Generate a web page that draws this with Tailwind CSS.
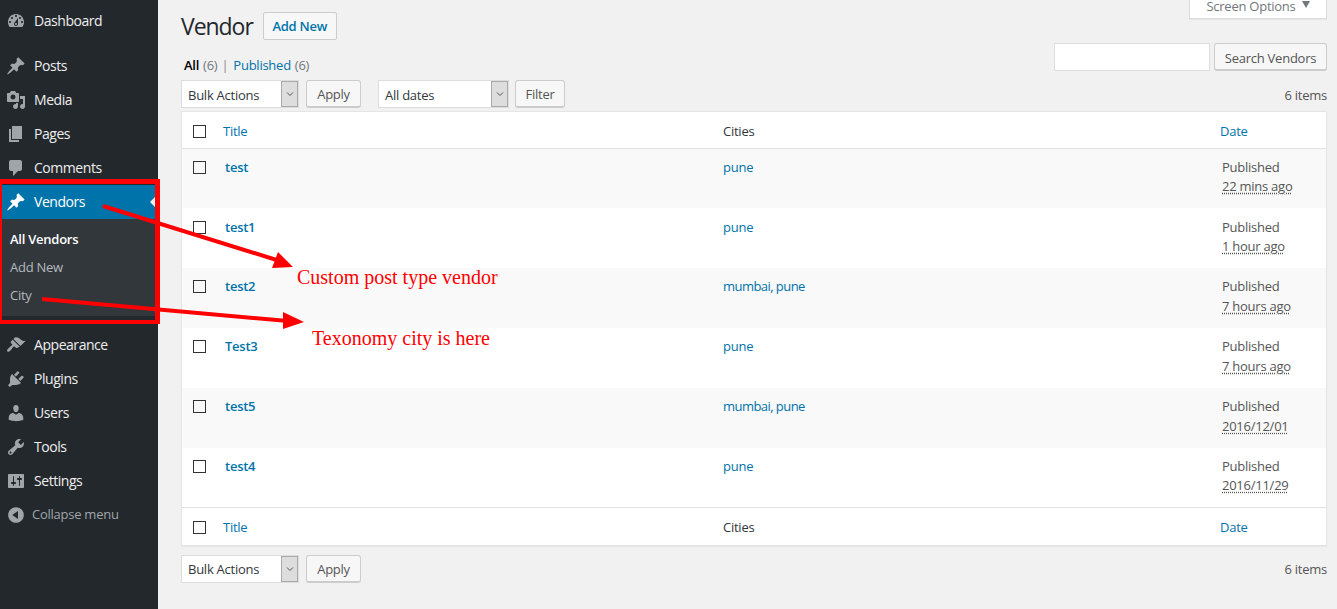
<!DOCTYPE html>
<html lang="en">
<head>
    <meta charset="UTF-8">
    <title>Vendor</title>
    <script src="https://cdn.jsdelivr.net/npm/@tailwindcss/browser@4"></script>
</head>
<body class="relative h-[609px] overflow-hidden bg-[#f1f1f1] font-['Open_Sans',sans-serif] text-[13px] leading-[19px] tracking-[-0.25px] text-[#444]">
    <div class="flex h-[609px]">
        <!-- Sidebar -->
        <nav class="w-[158px] shrink-0 bg-[#23282d] pt-1 text-[14px] tracking-[-0.45px] text-[#eee]">
            <a class="flex h-[34px] items-center">
                <svg class="ml-[6px] h-5 w-5 fill-[#a0a5aa]" viewBox="0 0 20 20"><path fill-rule="evenodd" d="M3.76 16h12.48c1.1-1.37 1.76-3.11 1.76-5 0-4.42-3.58-8-8-8s-8 3.58-8 8c0 1.89.66 3.63 1.76 5zM10 4c.55 0 1 .45 1 1s-.45 1-1 1-1-.45-1-1 .45-1 1-1zM6 6c.55 0 1 .45 1 1s-.45 1-1 1-1-.45-1-1 .45-1 1-1zm8 0c.55 0 1 .45 1 1s-.45 1-1 1-1-.45-1-1 .45-1 1-1zm-5.37 5.55L12 7v6c0 1.1-.9 2-2 2s-2-.9-2-2c0-.57.24-1.08.63-1.45zM4 10c.55 0 1 .45 1 1s-.45 1-1 1-1-.45-1-1 .45-1 1-1zm12 0c.55 0 1 .45 1 1s-.45 1-1 1-1-.45-1-1 .45-1 1-1zm-5 3c0-.55-.45-1-1-1s-1 .45-1 1 .45 1 1 1 1-.45 1-1z"/></svg>
                <span class="ml-2 -mt-[2px]">Dashboard</span>
            </a>
            <div class="h-[11px]"></div>
            <a class="flex h-[34px] items-center">
                <svg class="ml-[6px] h-5 w-5 fill-[#a0a5aa]" viewBox="0 0 20 20"><path d="M10.44 3.02l1.82-1.82 6.36 6.35-1.83 1.82c-1.05-.68-2.48-.57-3.41.36l-.75.75c-.92.93-1.04 2.35-.35 3.41l-1.83 1.82-2.41-2.41-2.8 2.79c-.42.42-3.38 2.71-3.8 2.29s1.86-3.39 2.28-3.81l2.79-2.79L4.1 9.36l1.83-1.82c1.05.69 2.48.57 3.4-.36l.75-.75c.93-.92 1.05-2.35.36-3.41z"/></svg>
                <span class="ml-2 -mt-[2px]">Posts</span>
            </a>
            <a class="flex h-[34px] items-center">
                <svg class="ml-[6px] h-5 w-5 fill-[#a0a5aa]" viewBox="0 0 20 20"><path fill-rule="evenodd" d="M13 11V4c0-.55-.45-1-1-1h-1.67L9 1H5L3.67 3H2c-.55 0-1 .45-1 1v7c0 .55.45 1 1 1h10c.55 0 1-.45 1-1zM7 4.5c1.38 0 2.5 1.12 2.5 2.5S8.38 9.5 7 9.5 4.5 8.38 4.5 7 5.62 4.5 7 4.5zM14 6h5v10.5c0 1.38-1.12 2.5-2.5 2.5S14 17.88 14 16.5s1.12-2.5 2.5-2.5c.17 0 .34.02.5.05V9h-3V6zm-4 8.05V13h2v3.5c0 1.38-1.12 2.5-2.5 2.5S7 17.88 7 16.5 8.12 14 9.5 14c.17 0 .34.02.5.05z"/></svg>
                <span class="ml-2 -mt-[2px]">Media</span>
            </a>
            <a class="flex h-[34px] items-center">
                <svg class="ml-[6px] h-5 w-5 fill-[#a0a5aa]" viewBox="0 0 20 20"><path d="M6 15V2h10v13H6zm-1 1h8v2H3V5h2v11z"/></svg>
                <span class="ml-2 -mt-[2px]">Pages</span>
            </a>
            <a class="flex h-[34px] items-center">
                <svg class="ml-[6px] h-5 w-5 fill-[#a0a5aa]" viewBox="0 0 20 20"><path d="M5 2h9c1.1 0 2 .9 2 2v7c0 1.1-.9 2-2 2h-2l-5 5v-5H5c-1.1 0-2-.9-2-2V4c0-1.1.9-2 2-2z"/></svg>
                <span class="ml-2 -mt-[2px]">Comments</span>
            </a>
            <!-- Current menu -->
            <a class="relative flex h-[34px] items-center bg-[#0073aa] text-white">
                <svg class="ml-[6px] h-5 w-5 fill-white" viewBox="0 0 20 20"><path d="M10.44 3.02l1.82-1.82 6.36 6.35-1.83 1.82c-1.05-.68-2.48-.57-3.41.36l-.75.75c-.92.93-1.04 2.35-.35 3.41l-1.83 1.82-2.41-2.41-2.8 2.79c-.42.42-3.38 2.71-3.8 2.29s1.86-3.39 2.28-3.81l2.79-2.79L4.1 9.36l1.83-1.82c1.05.69 2.48.57 3.4-.36l.75-.75c.93-.92 1.05-2.35.36-3.41z"/></svg>
                <span class="ml-2 -mt-[2px]">Vendors</span>
                <span class="absolute right-0 top-[9px] h-0 w-0 border-y-[8px] border-r-[8px] border-y-transparent border-r-[#f1f1f1]"></span>
            </a>
            <div class="h-[97px] bg-[#32373c] pt-[6px] pl-[10px] text-[13px] tracking-[-0.25px]">
                <div class="flex h-[28px] items-center font-semibold text-white">All Vendors</div>
                <div class="flex h-[28px] items-center text-[#b4b9be]">Add New</div>
                <div class="flex h-[28px] items-center text-[#b4b9be]">City</div>
            </div>
            <div class="h-[12px]"></div>
            <a class="flex h-[34px] items-center">
                <svg class="ml-[6px] h-5 w-5 fill-[#a0a5aa]" viewBox="0 0 20 20"><path d="M14.48 11.06L7.41 3.99l1.5-1.5c.5-.56 2.3-.47 3.51.32 1.21.8 1.43 1.28 2.91 2.1 1.18.64 2.45 1.26 4.45.85zm-.71.71L6.7 4.7 4.93 6.47c-.39.39-.39 1.02 0 1.41l1.06 1.06c.39.39.39 1.03 0 1.42-.6.6-1.43 1.11-2.21 1.69-.35.26-.7.53-1.01.84-1.34 1.34-2.37 2.51-1.37 3.51 1 1 2.12-.1 3.49-1.46.31-.31.58-.66.84-1.01.58-.78 1.09-1.61 1.69-2.21.39-.39 1.02-.39 1.41 0l1.06 1.06c.39.39 1.02.39 1.41 0z"/></svg>
                <span class="ml-2 -mt-[2px]">Appearance</span>
            </a>
            <a class="flex h-[34px] items-center">
                <svg class="ml-[6px] h-5 w-5 fill-[#a0a5aa]" viewBox="0 0 20 20"><path d="M13.11 4.36L9.87 7.6 8 5.73l3.24-3.24c.35-.34 1.05-.2 1.56.32.52.51.66 1.21.31 1.55zm-8 1.77l.91-1.12 9.01 9.01-1.19.84c-.71.71-2.63 1.16-3.82 1.16H6.14L4.9 17.26c-.59.59-1.54.59-2.12 0-.59-.58-.59-1.53 0-2.12l1.24-1.24v-3.88c0-1.13.4-3.19 1.09-3.89zm7.26 3.97l3.24-3.24c.34-.35 1.04-.21 1.55.31.52.51.66 1.21.31 1.55l-3.24 3.25z"/></svg>
                <span class="ml-2 -mt-[2px]">Plugins</span>
            </a>
            <a class="flex h-[34px] items-center">
                <svg class="ml-[6px] h-5 w-5 fill-[#a0a5aa]" viewBox="0 0 20 20"><path d="M10 9.25c-2.27 0-2.73-3.44-2.73-3.44C7 4.02 7.82 2 9.97 2c2.16 0 2.98 2.02 2.71 3.81 0 0-.41 3.44-2.68 3.44zm0 2.57L12.72 10c2.39 0 4.52 2.33 4.52 4.53v2.49s-3.65 1.13-7.24 1.13c-3.65 0-7.24-1.13-7.24-1.13v-2.49c0-2.25 1.94-4.48 4.47-4.48z"/></svg>
                <span class="ml-2 -mt-[2px]">Users</span>
            </a>
            <a class="flex h-[34px] items-center">
                <svg class="ml-[6px] h-5 w-5 fill-[#a0a5aa]" viewBox="0 0 20 20"><path fill-rule="evenodd" d="M16.68 9.77c-1.34 1.34-3.3 1.67-4.95.99l-5.41 6.52c-.99.99-2.59.99-3.58 0s-.99-2.59 0-3.57l6.52-5.42c-.68-1.65-.35-3.61.99-4.95 1.28-1.28 3.12-1.62 4.72-1.06l-2.89 2.89 2.82 2.82 2.86-2.87c.53 1.58.18 3.39-1.08 4.65zM3.81 16.21c.4.39 1.04.39 1.43 0 .4-.4.4-1.04 0-1.43-.39-.4-1.03-.4-1.43 0-.39.39-.39 1.03 0 1.43z"/></svg>
                <span class="ml-2 -mt-[2px]">Tools</span>
            </a>
            <a class="flex h-[34px] items-center">
                <svg class="ml-[6px] h-5 w-5 fill-[#a0a5aa]" viewBox="0 0 20 20"><path fill-rule="evenodd" d="M18 16V4c0-.55-.45-1-1-1H3c-.55 0-1 .45-1 1v12c0 .55.45 1 1 1h14c.55 0 1-.45 1-1zM8 11h1c.55 0 1 .45 1 1s-.45 1-1 1H8v1.5c0 .28-.22.5-.5.5s-.5-.22-.5-.5V13H6c-.55 0-1-.45-1-1s.45-1 1-1h1V5.5c0-.28.22-.5.5-.5s.5.22.5.5V11zm5-2h-1c-.55 0-1-.45-1-1s.45-1 1-1h1V5.5c0-.28.22-.5.5-.5s.5.22.5.5V7h1c.55 0 1 .45 1 1s-.45 1-1 1h-1v5.5c0 .28-.22.5-.5.5s-.5-.22-.5-.5V9z"/></svg>
                <span class="ml-2 -mt-[2px]">Settings</span>
            </a>
            <a class="flex h-[33px] items-center text-[13px] tracking-[-0.25px] text-[#a0a5aa]">
                <svg class="ml-[6px] h-5 w-5 fill-[#a0a5aa]" viewBox="0 0 20 20"><path fill-rule="evenodd" d="M10 2.16c4.33 0 7.84 3.51 7.84 7.84s-3.51 7.84-7.84 7.84S2.16 14.33 2.16 10 5.71 2.16 10 2.16zm2 11.72V6.12L6.18 9.97z"/></svg>
                <span class="ml-[6px]">Collapse menu</span>
            </a>
        </nav>

        <!-- Main -->
        <main class="relative min-w-0 flex-1 pl-[23px] pr-[10px]">
            <!-- Screen options tab -->
            <div class="absolute right-[10px] top-0 flex h-[19px] w-[138px] items-start justify-center gap-[6px] border-x border-b border-[#ddd] bg-white text-[#72777c] leading-[13px] shadow-[0_1px_1px_rgba(0,0,0,0.04)]">
                <span>Screen Options</span>
                <span class="mt-[1px] h-0 w-0 border-x-[4px] border-t-[7px] border-x-transparent border-t-[#72777c]"></span>
            </div>

            <div class="flex justify-between">
                <div>
                    <div class="flex h-[43px] items-end">
                        <h1 class="mb-[2px] text-[23px] leading-[29px] tracking-[-1.05px] text-[#23282d]">Vendor</h1>
                        <a class="mb-[3px] ml-[10px] flex h-[28px] w-[74px] items-center justify-center rounded-[2px] border border-[#ccc] bg-[#f7f7f7] font-semibold text-[#0073aa]">Add New</a>
                    </div>
                    <div class="mt-[13px] flex text-[#72777c]">
                        <b class="ml-[3px] font-semibold text-black">All</b>
                        <span class="ml-1">(6)</span>
                        <span class="ml-[4px] mr-[5px] text-[#888]">|</span>
                        <span class="text-[#0073aa]">Published</span>
                        <span class="ml-1">(6)</span>
                    </div>
                </div>
                <div class="mt-[43px] flex gap-1">
                    <div class="h-[28px] w-[156px] border border-[#ddd] bg-white"></div>
                    <a class="flex h-[28px] w-[113px] items-center justify-center rounded-[3px] border border-b-2 border-[#ccc] bg-[#f7f7f7] pt-[3px] text-[#555]">Search Vendors</a>
                </div>
            </div>

            <!-- Top toolbar -->
            <div class="mt-[5px] flex h-[28px] items-center">
                <div class="flex h-[28px] w-[118px] border border-[#ddd] bg-white">
                    <span class="flex flex-1 items-center pl-[6px] pt-[2px] text-[#32373c]">Bulk Actions</span>
                    <span class="flex w-[17px] items-center justify-center border border-[#aaa] bg-[#ddd]">
                        <svg class="h-2 w-2 fill-none stroke-[#555]" viewBox="0 0 8 8"><path d="M1 2.5l3 3 3-3"/></svg>
                    </span>
                </div>
                <a class="ml-[7px] flex h-[28px] w-[55px] items-center justify-center rounded-[3px] border border-b-2 border-[#ccc] bg-[#f7f7f7] pt-[2px] text-[#555]">Apply</a>
                <div class="ml-[17px] flex h-[28px] w-[131px] border border-[#ddd] bg-white">
                    <span class="flex flex-1 items-center pl-[6px] pt-[2px] text-[#32373c]">All dates</span>
                    <span class="flex w-[17px] items-center justify-center border border-[#aaa] bg-[#ddd]">
                        <svg class="h-2 w-2 fill-none stroke-[#555]" viewBox="0 0 8 8"><path d="M1 2.5l3 3 3-3"/></svg>
                    </span>
                </div>
                <a class="ml-[6px] flex h-[28px] w-[50px] items-center justify-center rounded-[3px] border border-b-2 border-[#ccc] bg-[#f7f7f7] pt-[2px] text-[#555]">Filter</a>
                <span class="ml-auto pt-[2px] text-[#555]">6 items</span>
            </div>

            <!-- Table -->
            <div class="mt-[3px] border border-[#e5e5e5] bg-white shadow-[0_1px_1px_rgba(0,0,0,0.04)]">
                <div class="grid h-[37px] grid-cols-[41px_500px_497px_1fr] items-center border-b border-[#e1e1e1] pt-[2px]">
                    <span class="ml-[11px] h-[13px] w-[13px] border border-[#333]"></span>
                    <span class="text-[#0073aa]">Title</span>
                    <span class="text-[#32373c]">Cities</span>
                    <span class="text-[#0073aa]">Date</span>
                </div>
                <div class="grid h-[59px] grid-cols-[43px_498px_499px_1fr] bg-[#f9f9f9] pt-[9px]">
                    <span class="ml-[11px] mt-[3px] h-[13px] w-[13px] border border-[#333]"></span>
                    <a class="font-semibold text-[#0073aa]">test</a>
                    <a class="text-[#0073aa]">pune</a>
                    <div class="text-[#555]">Published<br><span class="underline decoration-dotted underline-offset-2">22 mins ago</span></div>
                </div>
                <div class="grid h-[60px] grid-cols-[43px_498px_499px_1fr] pt-[10px]">
                    <span class="ml-[11px] mt-[3px] h-[13px] w-[13px] border border-[#333]"></span>
                    <a class="font-semibold text-[#0073aa]">test1</a>
                    <a class="text-[#0073aa]">pune</a>
                    <div class="text-[#555]">Published<br><span class="underline decoration-dotted underline-offset-2">1 hour ago</span></div>
                </div>
                <div class="grid h-[60px] grid-cols-[43px_498px_499px_1fr] bg-[#f9f9f9] pt-[9px]">
                    <span class="ml-[11px] mt-[3px] h-[13px] w-[13px] border border-[#333]"></span>
                    <a class="font-semibold text-[#0073aa]">test2</a>
                    <a class="tracking-[-0.55px] text-[#0073aa]">mumbai, pune</a>
                    <div class="text-[#555]">Published<span class="mt-px block underline decoration-dotted underline-offset-2">7 hours ago</span></div>
                </div>
                <div class="grid h-[60px] grid-cols-[43px_498px_499px_1fr] pt-[9px]">
                    <span class="ml-[11px] mt-[3px] h-[13px] w-[13px] border border-[#333]"></span>
                    <a class="font-semibold text-[#0073aa]">Test3</a>
                    <a class="text-[#0073aa]">pune</a>
                    <div class="text-[#555]">Published<span class="mt-px block underline decoration-dotted underline-offset-2">7 hours ago</span></div>
                </div>
                <div class="grid h-[60px] grid-cols-[43px_498px_499px_1fr] bg-[#f9f9f9] pt-[9px]">
                    <span class="ml-[11px] mt-[3px] h-[13px] w-[13px] border border-[#333]"></span>
                    <a class="font-semibold text-[#0073aa]">test5</a>
                    <a class="tracking-[-0.55px] text-[#0073aa]">mumbai, pune</a>
                    <div class="text-[#555]">Published<span class="mt-px block underline decoration-dotted underline-offset-2">2016/12/01</span></div>
                </div>
                <div class="grid h-[59px] grid-cols-[43px_498px_499px_1fr] pt-[9px]">
                    <span class="ml-[11px] mt-[3px] h-[13px] w-[13px] border border-[#333]"></span>
                    <a class="font-semibold text-[#0073aa]">test4</a>
                    <a class="text-[#0073aa]">pune</a>
                    <div class="text-[#555]">Published<br><span class="underline decoration-dotted underline-offset-2">2016/11/29</span></div>
                </div>
                <div class="grid h-[38px] grid-cols-[41px_500px_497px_1fr] items-center border-t border-[#e1e1e1] pt-[2px]">
                    <span class="ml-[11px] h-[13px] w-[13px] border border-[#333]"></span>
                    <span class="text-[#0073aa]">Title</span>
                    <span class="text-[#32373c]">Cities</span>
                    <span class="text-[#0073aa]">Date</span>
                </div>
            </div>

            <!-- Bottom toolbar -->
            <div class="mt-[9px] flex h-[28px] items-center">
                <div class="flex h-[28px] w-[118px] border border-[#ddd] bg-white">
                    <span class="flex flex-1 items-center pl-[6px] text-[#32373c]">Bulk Actions</span>
                    <span class="flex w-[17px] items-center justify-center border border-[#aaa] bg-[#ddd]">
                        <svg class="h-2 w-2 fill-none stroke-[#555]" viewBox="0 0 8 8"><path d="M1 2.5l3 3 3-3"/></svg>
                    </span>
                </div>
                <a class="ml-[7px] flex h-[28px] w-[55px] items-center justify-center rounded-[3px] border border-b-2 border-[#ccc] bg-[#f7f7f7] pt-[2px] text-[#555]">Apply</a>
                <span class="ml-auto text-[#555]">6 items</span>
            </div>
        </main>
    </div>

    <!-- Red annotations drawn over the page -->
    <svg class="pointer-events-none absolute left-0 top-0 h-[609px] w-[1337px]" viewBox="0 0 1337 609">
        <path class="fill-[#f00]" fill-rule="evenodd" d="M0 179H160V324H0ZM2 184V320H155V184Z"/>
        <path class="fill-none stroke-[#f00] stroke-[4]" d="M103 206L280 261"/>
        <path class="fill-[#f00]" d="M272 268L278 252L293 267Z"/>
        <path class="fill-none stroke-[#f00] stroke-[4]" d="M42 299L288 321"/>
        <path class="fill-[#f00]" d="M283 312L283 329L304 322Z"/>
    </svg>
    <span class="absolute left-[297px] top-[265px] font-['Liberation_Serif',serif] text-[20px] leading-[24px] tracking-normal text-[#f00]">Custom post type vendor</span>
    <span class="absolute left-[312px] top-[326px] font-['Liberation_Serif',serif] text-[20px] leading-[24px] tracking-normal text-[#f00]">Texonomy city is here</span>
</body>
</html>
